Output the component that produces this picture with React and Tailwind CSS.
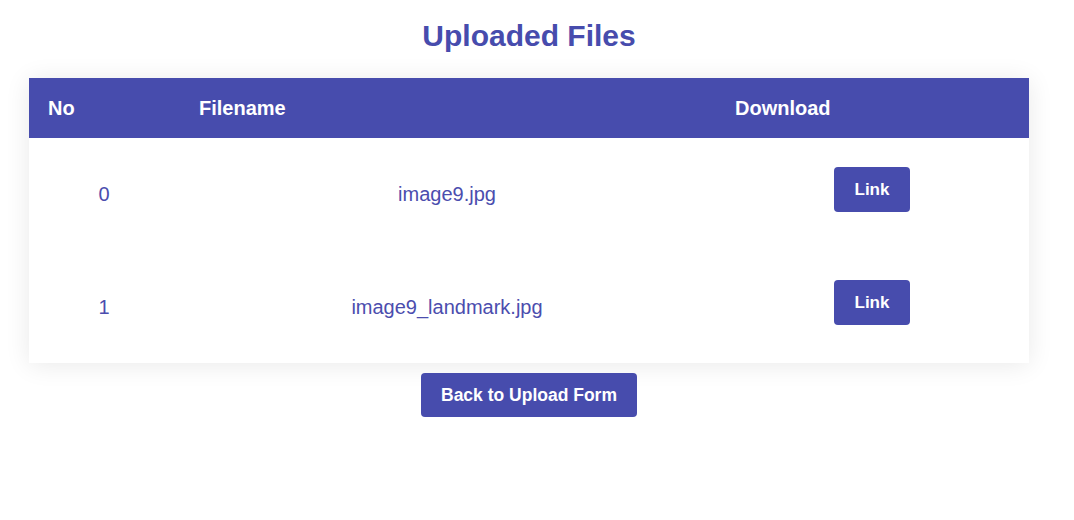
import React from "react";

const files = ["image9.jpg", "image9_landmark.jpg"];

export default function App() {
  return (
    <div className="min-h-[520px] bg-white font-['Liberation_Sans',Arial,sans-serif]">
      <div className="ml-[29px] w-[1000px] pt-[18px]">
        <h1 className="text-center text-[30px] font-bold leading-[36px] text-[#474cad]">
          Uploaded Files
        </h1>

        {/* table */}
        <div className="mt-[24px] bg-white shadow-[0_2px_24px_rgba(0,0,0,0.09)]">
          <div className="grid h-[60px] grid-cols-[150px_536px_314px] items-center bg-[#474cad] text-[20px] font-bold text-white">
            <div className="pl-[19px]">No</div>
            <div className="pl-[20px]">Filename</div>
            <div className="pl-[20px]">Download</div>
          </div>
          {files.map((f, i) => (
            <div
              key={f}
              className="grid h-[112.5px] grid-cols-[150px_536px_314px] items-center text-[20px] text-[#4b4dae]"
            >
              <div className="text-center">{i}</div>
              <div className="text-center">{f}</div>
              <div className="flex justify-center">
                <button className="mb-[9px] h-[45px] rounded-[4px] bg-[#474cad] px-[21px] text-[17px] font-bold text-white">
                  Link
                </button>
              </div>
            </div>
          ))}
        </div>

        <div className="mt-[10px] flex justify-center">
          <button className="h-[44px] rounded-[4px] bg-[#474cad] px-[20px] text-[17.5px] font-bold text-white">
            Back to Upload Form
          </button>
        </div>
      </div>
    </div>
  );
}
